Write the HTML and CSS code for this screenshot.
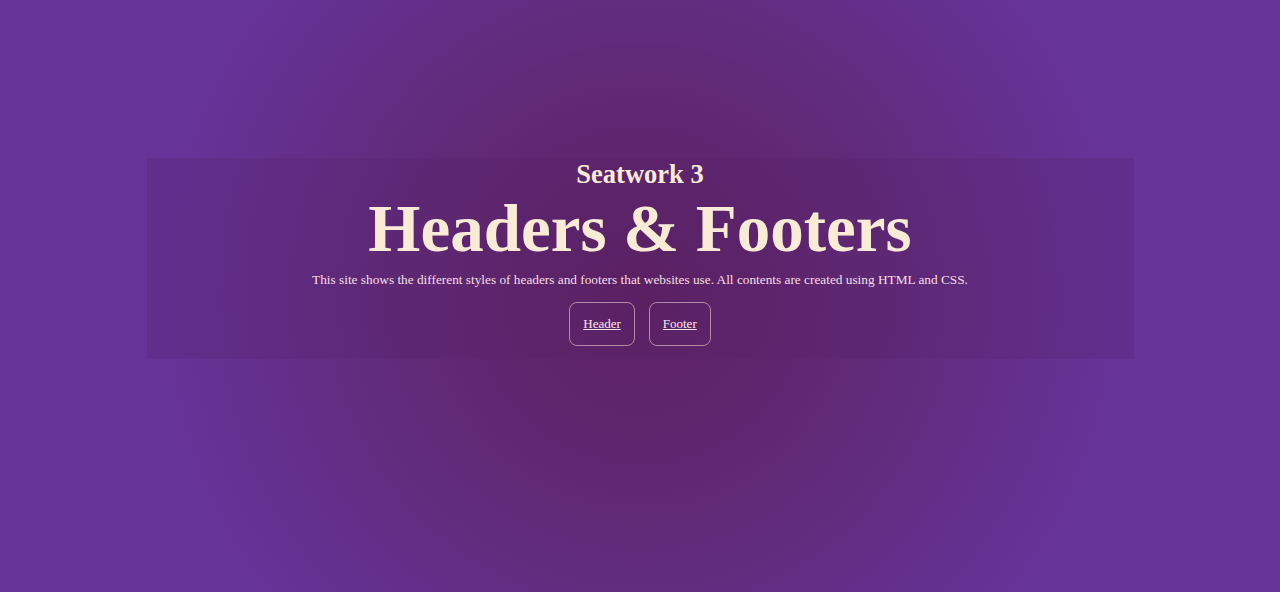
FILE: index.html
```html
<!DOCTYPE html>
<html lang="en">
<head>
<meta charset="utf-8">
<title>Headers &amp; Footers</title>
<link rel="stylesheet" href="styles.css">
</head>
<body>
<main class="page">
  <section class="banner">
    <h2 class="subtitle">Seatwork 3</h2>
    <h1 class="title">Headers &amp; Footers</h1>
    <p class="intro">This site shows the different styles of headers and footers that websites use. All contents are created using HTML and CSS.</p>
    <nav class="links">
      <a class="link-btn" href="#header">Header</a>
      <a class="link-btn" href="#footer">Footer</a>
    </nav>
  </section>
</main>
</body>
</html>
```
FILE: styles.css
```css
html, body {
  margin: 0;
  padding: 0;
  height: 100%;
}

body {
  font-family: "Liberation Serif", "Times New Roman", serif;
  background: radial-gradient(circle 480px at 50% 50%, #5d2162 0%, #612a78 50%, #663399 100%);
  background-color: #663399;
  color: #faebd7;
}

.page {
  min-height: 100%;
  padding-top: 158px;
  box-sizing: border-box;
}

.banner {
  width: 987px;
  margin: 0 auto;
  padding: 1px 0 13px;
  background: rgba(80, 30, 100, 0.22);
  text-align: center;
}

.subtitle {
  margin: 0;
  font-size: 26.5px;
  font-weight: bold;
}

.title {
  margin: 0;
  font-size: 67px;
  font-weight: bold;
}

.intro {
  margin: 5px 0 0;
  font-size: 13.3px;
  color: #f6dfe3;
}

.links {
  display: flex;
  justify-content: center;
  gap: 14px;
  margin-top: 14px;
}

.link-btn {
  display: block;
  padding: 13px;
  font-size: 13px;
  line-height: 15px;
  height: 15px;
  padding-bottom: 14px;
  color: #fbe9ef;
  text-decoration: underline;
  border: 1px solid #b48aa8;
  border-radius: 8px;
}
```
